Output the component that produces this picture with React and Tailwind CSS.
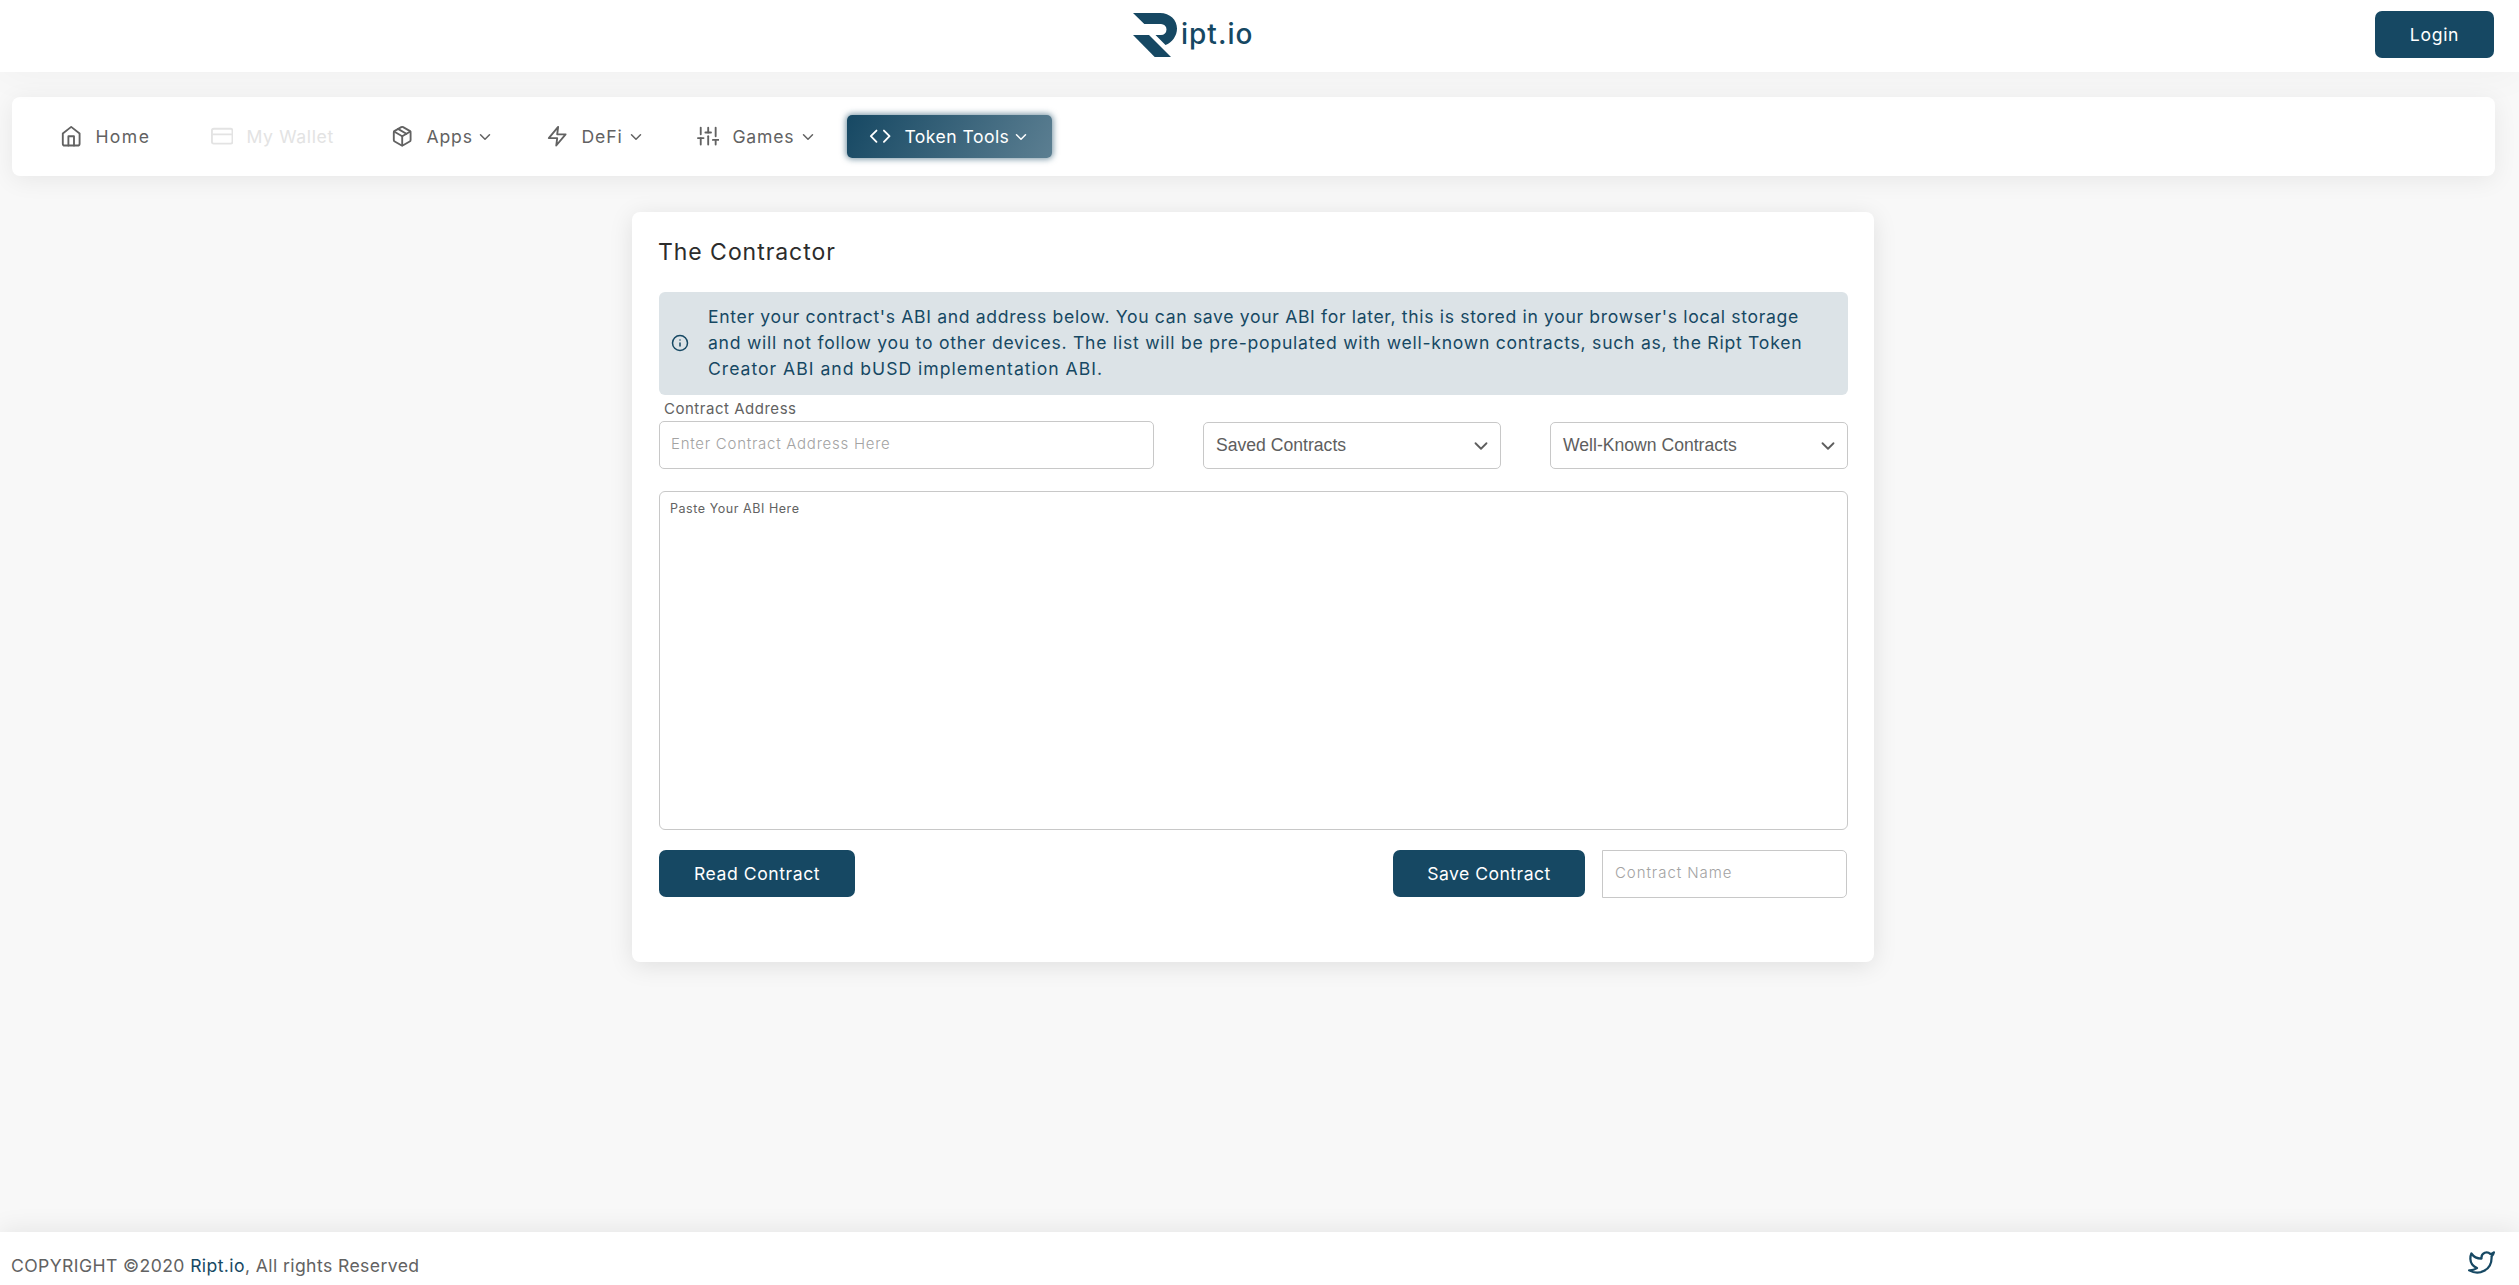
import {
  FiHome,
  FiCreditCard,
  FiPackage,
  FiZap,
  FiSliders,
  FiCode,
  FiChevronDown,
  FiInfo,
  FiTwitter,
} from "react-icons/fi";

function Logo() {
  return (
    <a className="flex h-[45px] items-start text-[#164863]">
      <svg width="45" height="45" viewBox="0 0 45 45" fill="currentColor">
        <path d="M0 0H27C37 0 44 7 44 15.5C44 23 39 29.5 32.5 32L22.5 22H28A5.5 5.5 0 0 0 28 11H11.3Z" />
        <path d="M0 22H16L38 44H21.7Z" />
      </svg>
      <span className="ml-[3px] mt-1 text-[28px] leading-[34px] font-medium tracking-[1px]">
        ipt.io
      </span>
    </a>
  );
}

function NavItem({ icon: Icon, label, labelClass, className = "", menu }) {
  return (
    <div className={`flex h-[43px] items-center ${className}`}>
      <Icon size={22.4} className="shrink-0" />
      <span className={`ml-[13px] pt-px whitespace-nowrap ${labelClass}`}>{label}</span>
      {menu && <FiChevronDown size={18} className="shrink-0" />}
    </div>
  );
}

function Button({ children, className = "" }) {
  return (
    <button
      className={`flex h-[47px] shrink-0 items-center justify-center rounded-[7px] bg-[#164863] pt-px text-[17.6px] text-white ${className}`}
    >
      {children}
    </button>
  );
}

function Select({ children }) {
  return (
    <div className="mt-px flex h-[47px] w-[298px] items-center justify-between rounded-[5px] border border-[#c8c8c8] pr-2 pl-3 font-['Liberation_Sans',Arial,sans-serif] text-[17.6px] text-[#5e5e5e]">
      <span>{children}</span>
      <FiChevronDown size={22} />
    </div>
  );
}

export default function App() {
  return (
    <div className="flex h-[1285px] flex-col overflow-hidden bg-[#f8f8f8] font-[Inter,sans-serif] text-[#626262]">
      <header className="relative z-10 flex h-[72px] shrink-0 items-start justify-between bg-white pr-[25px] pl-[1133px] shadow-[0_4px_40px_rgba(0,0,0,0.035)]">
        <div className="pt-[13px]">
          <Logo />
        </div>
        <Button className="mt-[11px] w-[119px] tracking-[0.7px]">Login</Button>
      </header>

      <nav className="mt-[25px] mr-6 ml-3 grid h-[79px] shrink-0 grid-cols-[151px_179px_156px_151px_150px_205px] items-center rounded-lg bg-white pl-12 text-[17.6px] shadow-[0_4px_25px_rgba(0,0,0,0.07)]">
        <NavItem icon={FiHome} label="Home" labelClass="tracking-[1.4px]" />
        <NavItem
          icon={FiCreditCard}
          label="My Wallet"
          labelClass="tracking-[0.65px]"
          className="text-[#e3e3e3]"
        />
        <NavItem icon={FiPackage} label="Apps" labelClass="w-[50px] tracking-[0.9px]" className="pl-px" menu />
        <NavItem icon={FiZap} label="DeFi" labelClass="w-[46px] tracking-[0.9px]" menu />
        <NavItem icon={FiSliders} label="Games" labelClass="w-[67px] tracking-[0.8px]" menu />
        <NavItem
          icon={FiCode}
          label="Token Tools"
          labelClass="w-[108px] tracking-[0.45px]"
          className="rounded-[5px] bg-linear-[118deg,#164863,#164863b3] pl-[22px] text-white shadow-[0_0_6px_1px_rgba(22,72,99,0.6)]"
          menu
        />
      </nav>

      <main className="mt-9 ml-[632px] h-[750px] w-[1242px] shrink-0 rounded-lg bg-white pt-[26px] pr-[26px] pl-[27px] shadow-[0_4px_25px_rgba(0,0,0,0.1)]">
        <h1 className="-ml-px text-[23px] leading-[28px] tracking-[0.95px] text-[#2c2c2c]">
          The Contractor
        </h1>

        <div className="mt-[26px] flex h-[103px] items-center rounded-md bg-[#dce3e7] pb-px pl-3 text-[#164863]">
          <FiInfo size={18} className="shrink-0" />
          <p className="ml-[19px] text-[17.6px] leading-[26px] whitespace-nowrap">
            <span className="block tracking-[0.65px]">
              Enter your contract's ABI and address below. You can save your ABI for later, this is stored in your browser's local storage
            </span>
            <span className="block tracking-[0.74px]">
              and will not follow you to other devices. The list will be pre-populated with well-known contracts, such as, the Ript Token
            </span>
            <span className="block tracking-[0.99px]">Creator ABI and bUSD implementation ABI.</span>
          </p>
        </div>

        <label className="ml-[5px] block h-[26px] pt-[3px] text-[15px] leading-[22px] tracking-[0.52px]">
          Contract Address
        </label>

        <div className="flex items-start justify-between">
          <div className="h-12 w-[495px] rounded-[5px] border border-[#c8c8c8] pt-[11px] pl-[11px] text-[15px] leading-[22px] font-light tracking-[0.74px] text-[#a3a3a3]">
            Enter Contract Address Here
          </div>
          <Select>Saved Contracts</Select>
          <Select>Well-Known Contracts</Select>
        </div>

        <div className="mt-[22px] h-[339px] rounded-md border border-[#c8c8c8] pt-[7px] pl-[10px] text-[12.5px] leading-[20px] tracking-[0.55px]">
          Paste Your ABI Here
        </div>

        <div className="mt-5 flex items-start">
          <Button className="w-[196px] tracking-[0.55px]">Read Contract</Button>
          <Button className="ml-auto w-[192px] tracking-[0.45px]">Save Contract</Button>
          <div className="mr-px ml-[17px] h-12 w-[245px] rounded-r-[5px] border border-[#c8c8c8] pt-[11px] pl-[12px] text-[15px] leading-[22px] font-light tracking-[0.94px] text-[#a3a3a3]">
            Contract Name
          </div>
        </div>
      </main>

      <footer className="mt-auto flex h-[53px] shrink-0 items-start justify-between bg-white pr-6 pl-[11px] shadow-[0_-4px_25px_rgba(0,0,0,0.07)]">
        <p className="pt-[22px] text-[17.6px] leading-[24px] tracking-[0.4px]">
          COPYRIGHT ©2020 <span className="text-[#164863]">Ript.io</span>, All rights Reserved
        </p>
        <FiTwitter size={27} className="mt-[17px] text-[#164863]" />
      </footer>
    </div>
  );
}
